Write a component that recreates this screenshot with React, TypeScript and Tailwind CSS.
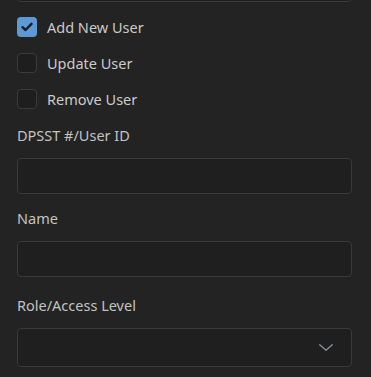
import React from "react";

function CheckRow({ label, checked }: { label: string; checked?: boolean }) {
  return (
    <label className="flex items-center gap-[10px] h-5">
      <span
        className={
          checked
            ? "w-5 h-5 rounded-[4px] bg-[#5c9ad6] flex items-center justify-center"
            : "w-5 h-5 rounded-[4px] border border-[#3b3b3b] bg-[#1e1e1e]"
        }
      >
        {checked && (
          <svg width="12" height="10" viewBox="0 0 12 10" fill="none">
            <path d="M1.5 5.2 4.5 8 10.5 1.8" stroke="#1c1c1c" strokeWidth="2.4" strokeLinecap="round" strokeLinejoin="round" />
          </svg>
        )}
      </span>
      <span className="text-[14.5px] leading-5 text-[#cacaca]">{label}</span>
    </label>
  );
}

function Field({ label, className }: { label: string; className: string }) {
  return (
    <div className={className}>
      <div className="text-[14.5px] leading-5 text-[#c2c2c2]">{label}</div>
      <div className="mt-[13px] h-9 rounded-[4px] border border-[#3a3a3a] bg-[#1f1f1f]" />
    </div>
  );
}

export default function App() {
  return (
    <div
      className="w-[371px] h-[377px] overflow-hidden bg-[#232323]"
      style={{ fontFamily: '"Noto Sans", "Open Sans", sans-serif' }}
    >
      <div className="pl-[17px] w-[352px]">
        <div className="-mt-[34px] h-9 rounded-[4px] border border-[#3a3a3a] bg-[#1f1f1f]" />
        <div className="mt-[15px] flex flex-col gap-4">
          <CheckRow label="Add New User" checked />
          <CheckRow label="Update User" />
          <CheckRow label="Remove User" />
        </div>
        <Field label="DPSST #/User ID" className="mt-4" />
        <Field label="Name" className="mt-[14px]" />
        <div className="mt-[18px]">
          <div className="text-[14.5px] leading-5 text-[#c2c2c2]">Role/Access Level</div>
          <div className="mt-[13px] h-[39px] rounded-[4px] border border-[#3a3a3a] bg-[#1f1f1f] flex items-center justify-end pr-[18px]">
            <svg width="14" height="7" viewBox="0 0 14 7" fill="none">
              <path d="M0.7 0.7 7 6.2 13.3 0.7" stroke="#8c9099" strokeWidth="1.3" strokeLinecap="round" strokeLinejoin="round" />
            </svg>
          </div>
        </div>
      </div>
    </div>
  );
}
